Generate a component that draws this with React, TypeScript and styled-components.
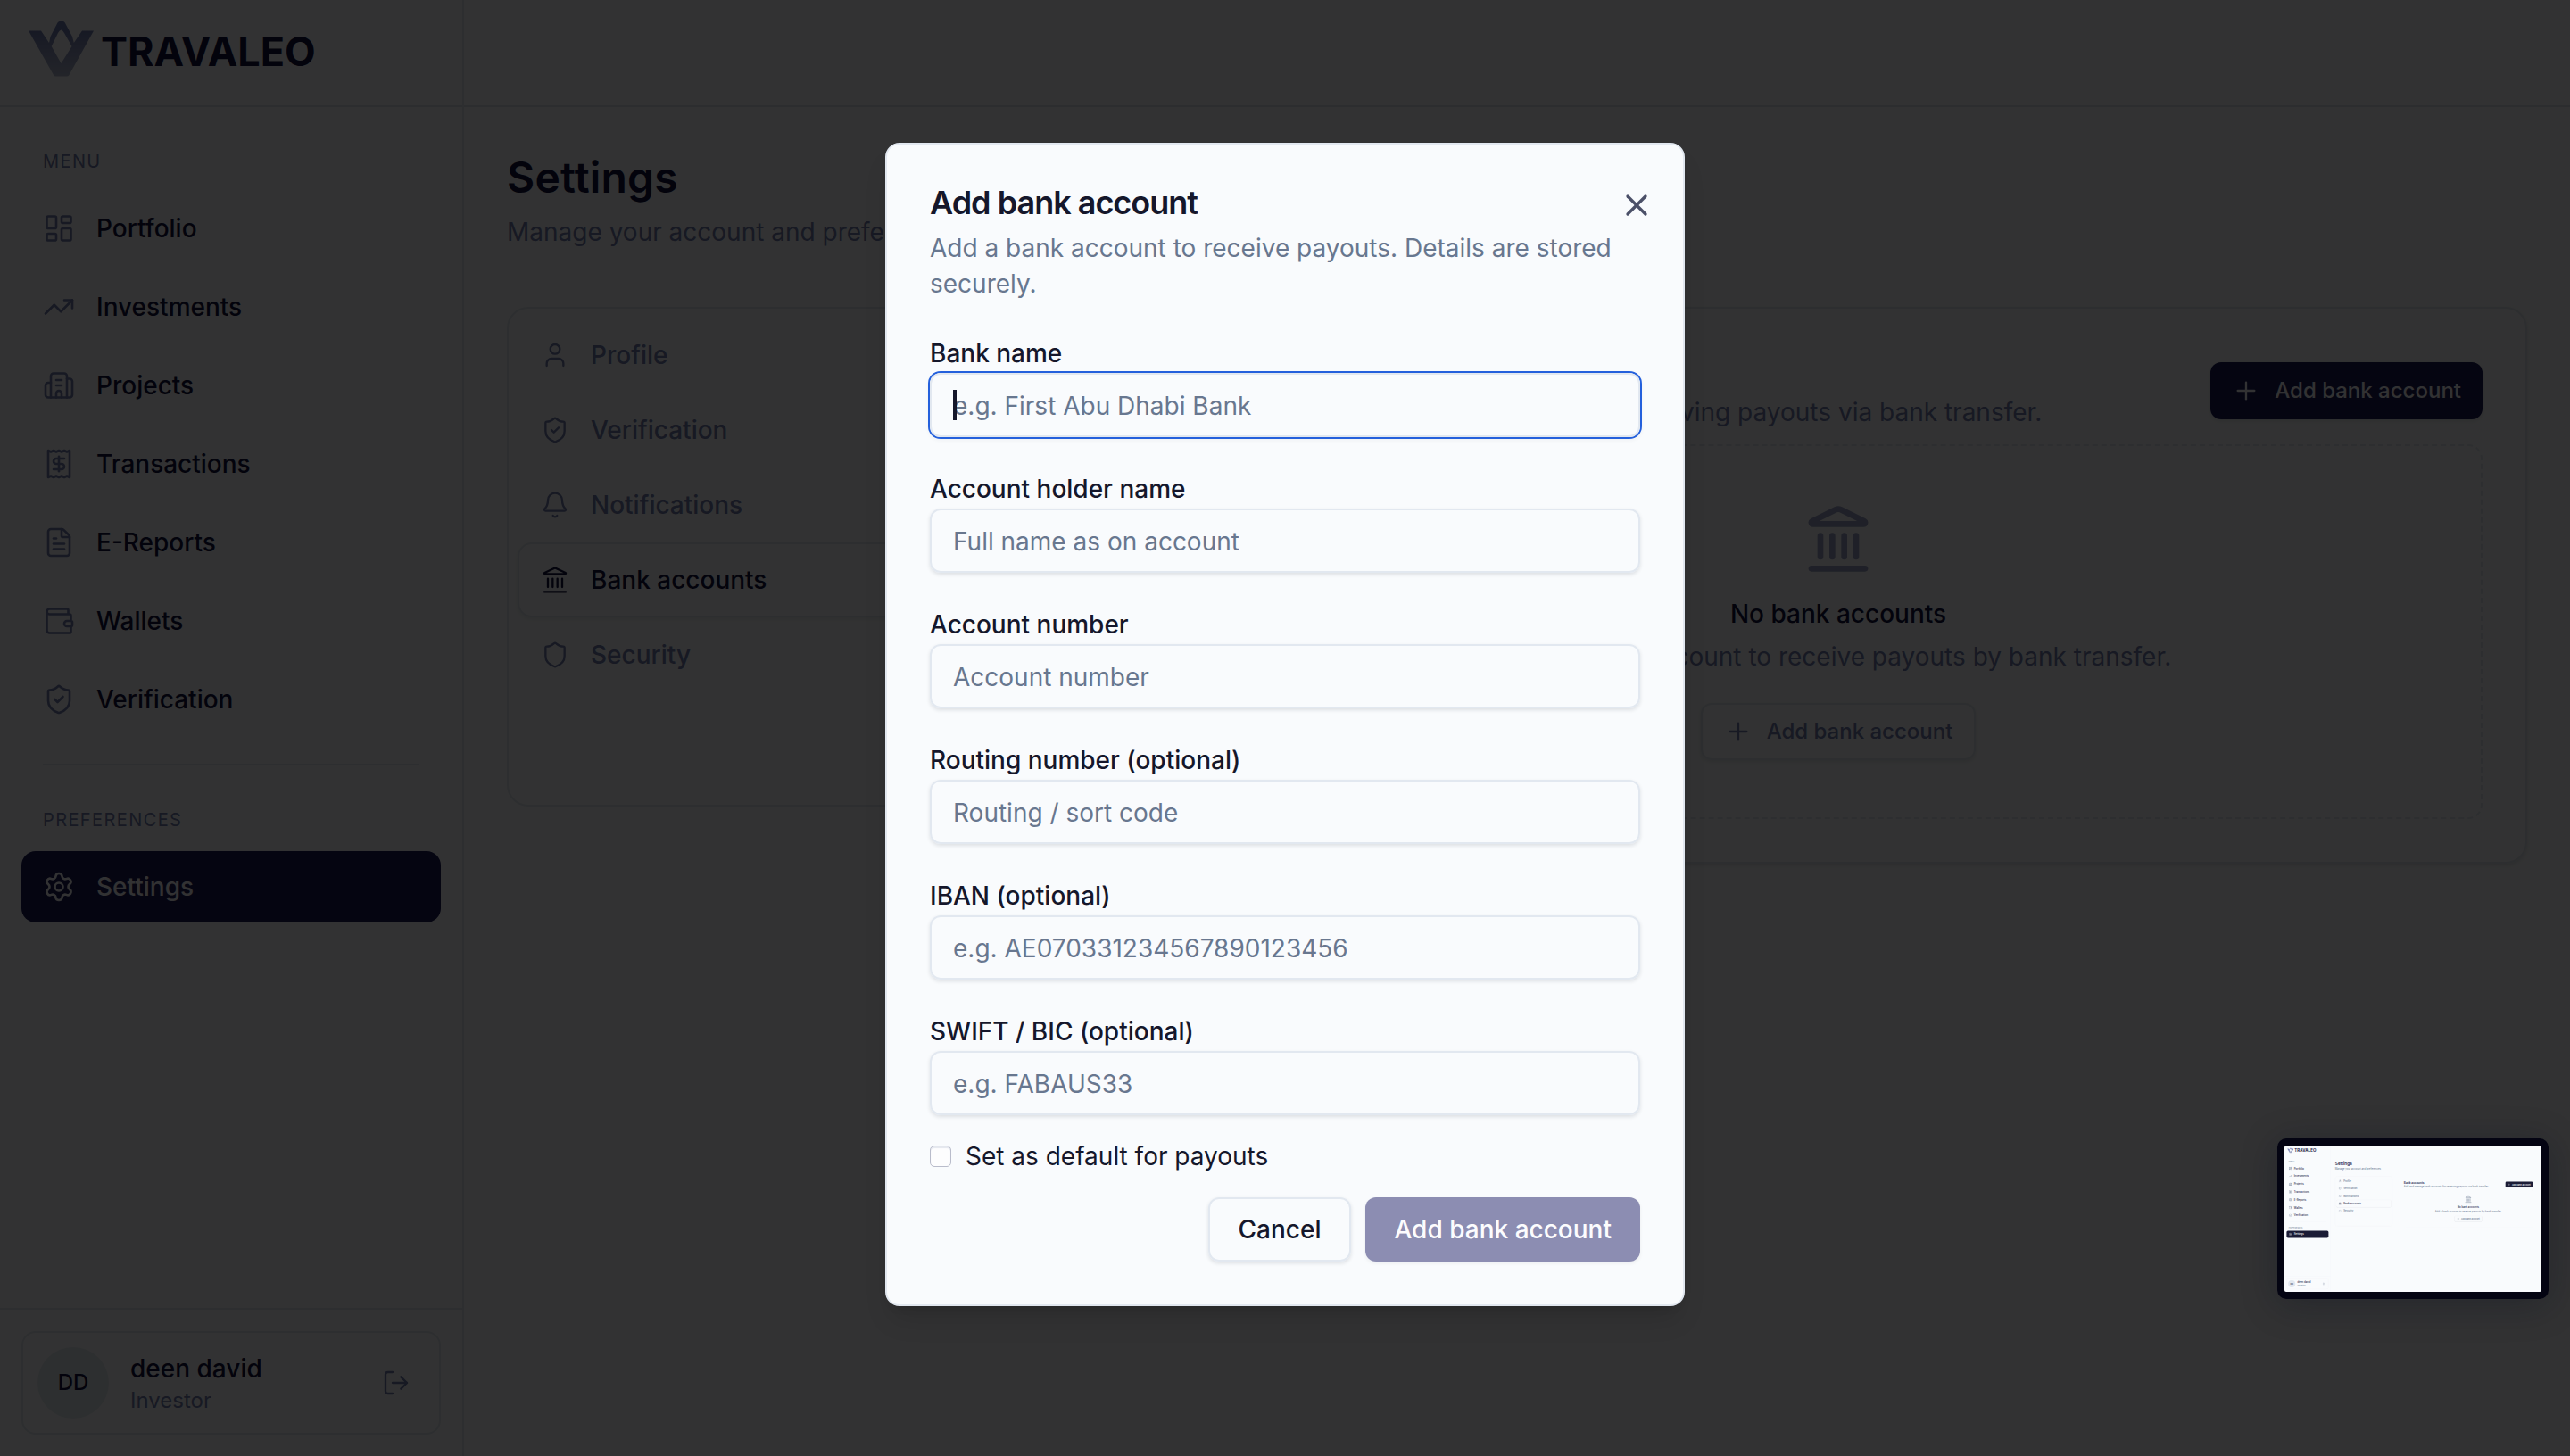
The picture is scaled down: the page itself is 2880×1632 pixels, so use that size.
import React from "react";
import styled, { createGlobalStyle, css } from "styled-components";
import {
  LayoutDashboard, TrendingUp, Building2, Receipt, FileText, Wallet, ShieldCheck,
  Settings, LogOut, User, Bell, Landmark, Shield, Plus, X,
} from "lucide-react";

const c = {
  bg: "#f9fbfd",
  border: "#e2e8f0",
  text: "#15172b",
  muted: "#68778f",
  slate: "#4b5068",
  ring: "#2460dc",
};

const Global = createGlobalStyle`
  :root {
    --ink: #12123f;
    --navy: #1a1a58;
    --soft: #727cae;
    --line: #dfe5ed;
  }
  *, *::before, *::after { box-sizing: border-box; }
  html, body { margin: 0; padding: 0; overflow: hidden; background: ${c.bg}; }
  body, input, button { font-family: Inter, "Liberation Sans", sans-serif; }
`;

const Screen = styled.div`
  position: relative;
  width: 2880px;
  height: 1632px;
  overflow: hidden;
`;

const Page = styled.div`
  display: flex;
  width: 2880px;
  height: 1632px;
  background: ${c.bg};
  color: var(--ink);
  font-size: 28px;
  line-height: 40px;
`;

const Sidebar = styled.aside`
  display: flex;
  flex-direction: column;
  width: 520px;
  border-right: 2px solid var(--line);
`;

const Brand = styled.div`
  display: flex;
  align-items: flex-start;
  height: 120px;
  padding: 24px 32px 0;
  border-bottom: 2px solid #d9e1ea;
`;

const BrandName = styled.span`
  margin: 7px 0 0 7px;
  font-size: 45px;
  line-height: 54px;
  font-weight: 700;
  letter-spacing: 0;
`;

const Nav = styled.nav`
  display: flex;
  flex-direction: column;
  flex: 1;
  padding: 46px 24px 0;
`;

const GroupTitle = styled.div`
  padding: 0 24px;
  margin-bottom: 20px;
  font-size: 20px;
  line-height: 30px;
  letter-spacing: 1.4px;
  color: var(--soft);
`;

const NavList = styled.div`
  display: flex;
  flex-direction: column;
  gap: 8px;
`;

const NavItem = styled.a<{ $active?: boolean }>`
  display: flex;
  align-items: center;
  gap: 24px;
  height: 80px;
  padding: 0 24px;
  border-radius: 16px;
  font-weight: 500;
  svg { color: var(--soft); }
  ${(p) => p.$active && css`
    background: var(--navy);
    color: ${c.bg};
    svg { color: ${c.bg}; }
  `}
`;

const Divider = styled.div`
  height: 2px;
  margin: 32px 24px 46px;
  background: var(--line);
`;

const Footer = styled.div`
  padding: 24px;
  border-top: 2px solid var(--line);
`;

const UserCard = styled.div`
  display: flex;
  align-items: center;
  gap: 24px;
  padding: 16px;
  border: 2px solid var(--line);
  border-radius: 16px;
`;

const Avatar = styled.div`
  display: grid;
  place-items: center;
  width: 80px;
  height: 80px;
  border-radius: 50%;
  background: ${c.border};
  font-size: 24px;
  font-weight: 500;
`;

const UserText = styled.div`
  flex: 1;
`;

const UserName = styled.div`
  font-weight: 500;
  line-height: 40px;
`;

const UserRole = styled.div`
  font-size: 24px;
  line-height: 32px;
  color: var(--soft);
`;

const LogoutButton = styled.div`
  display: flex;
  padding: 0 16px;
  color: var(--soft);
`;

const Main = styled.main`
  flex: 1;
  display: flex;
  flex-direction: column;
`;

const TopBar = styled.header`
  height: 120px;
  border-bottom: 2px solid #d9e1ea;
`;

const Content = styled.div`
  padding: 48px;
`;

const PageTitle = styled.h1`
  margin: 0 0 10px;
  font-size: 48px;
  line-height: 62px;
  font-weight: 600;
  letter-spacing: 0.2px;
`;

const Muted = styled.p`
  margin: 0;
  color: var(--soft);
`;

const Columns = styled.div`
  display: flex;
  align-items: flex-start;
  gap: 80px;
  margin-top: 64px;
`;

const Tabs = styled.div`
  width: 640px;
  height: 560px;
  padding: 10px;
  border: 2px solid var(--line);
  border-radius: 24px;
`;

const Tab = styled.div<{ $active?: boolean }>`
  display: flex;
  align-items: center;
  gap: 24px;
  height: 84px;
  padding: 0 24px;
  border: 2px solid transparent;
  border-radius: 16px;
  font-weight: 500;
  color: var(--soft);
  ${(p) => p.$active && css`
    border-color: var(--line);
    color: var(--ink);
    box-shadow: 0 2px 4px rgba(15, 23, 42, 0.08);
  `}
`;

const Card = styled.section`
  flex: 1;
  padding: 48px;
  border: 2px solid var(--line);
  border-radius: 24px;
  box-shadow: 0 2px 4px rgba(15, 23, 42, 0.12);
`;

const CardHead = styled.div`
  display: flex;
  align-items: center;
  justify-content: space-between;
  margin-bottom: 16px;
`;

const CardTitle = styled.h2`
  margin: 0 0 8px;
  font-size: 32px;
  line-height: 40px;
  font-weight: 600;
`;

const SmallButton = styled.div<{ $outline?: boolean }>`
  display: flex;
  align-items: center;
  gap: 16px;
  height: 64px;
  padding: 0 24px;
  border-radius: 12px;
  font-size: 24px;
  font-weight: 500;
  white-space: nowrap;
  background: var(--navy);
  color: ${c.bg};
  box-shadow: 0 2px 4px rgba(15, 23, 42, 0.1);
  ${(p) => p.$outline && css`
    margin-top: 32px;
    border: 2px solid var(--line);
    background: transparent;
    color: var(--soft);
  `}
`;

const Empty = styled.div`
  display: flex;
  flex-direction: column;
  align-items: center;
  padding: 64px;
  border: 2px dashed var(--line);
  border-radius: 16px;
  svg.empty-icon { color: var(--soft); opacity: 0.7; }
`;

const EmptyTitle = styled.div`
  margin: 24px 0 8px;
  font-weight: 500;
`;

const Overlay = styled.div`
  position: absolute;
  inset: 0;
  display: flex;
  align-items: flex-start;
  justify-content: center;
  padding-top: 160px;
  background: rgba(0, 0, 0, 0.8);
`;

const Dialog = styled.div`
  --soft: ${c.muted};
  position: relative;
  width: 896px;
  height: 1304px;
  padding: 48px;
  border: 2px solid ${c.border};
  border-radius: 16px;
  background: ${c.bg};
  color: ${c.text};
  font-size: 28px;
  line-height: 40px;
  box-shadow: 0 20px 30px -6px rgba(0, 0, 0, 0.12), 0 8px 12px -8px rgba(0, 0, 0, 0.12);
`;

const DialogTitle = styled.h2`
  margin: 0 0 14px;
  font-size: 36px;
  line-height: 34px;
  font-weight: 600;
  letter-spacing: -1px;
`;

const CloseIcon = styled.div`
  position: absolute;
  top: 48px;
  right: 32px;
  display: flex;
  color: ${c.slate};
`;

const Form = styled.div`
  display: flex;
  flex-direction: column;
  gap: 44px;
  margin-top: 44px;
`;

const Field = styled.label`
  position: relative;
  display: flex;
  flex-direction: column;
  gap: 8px;
  font-weight: 500;
  line-height: 28px;
`;

const Input = styled.input<{ $focused?: boolean }>`
  height: 72px;
  padding: 2px 24px 0;
  border: 2px solid ${c.border};
  border-radius: 12px;
  outline: none;
  background: transparent;
  font-size: 28px;
  color: ${c.text};
  box-shadow: ${(p) =>
    p.$focused
      ? `0 0 0 2px ${c.ring}, 0 2px 4px 2px rgba(15, 23, 42, 0.04)`
      : "0 2px 4px rgba(15, 23, 42, 0.12)"};
  &::placeholder { color: ${c.muted}; opacity: 1; }
`;

const Caret = styled.span`
  position: absolute;
  left: 26px;
  bottom: 19px;
  width: 4px;
  height: 34px;
  background: ${c.text};
`;

const CheckRow = styled.label`
  display: flex;
  align-items: center;
  gap: 16px;
  margin: 26px 0;
`;

const CheckBox = styled.span`
  width: 24px;
  height: 24px;
  border: 1px solid #b9bccb;
  border-radius: 5px;
  background: #fdfdfe;
  box-shadow: inset 0 2px 1px #e4e7ee;
`;

const Actions = styled.div`
  display: flex;
  justify-content: flex-end;
  gap: 16px;
`;

const Button = styled.div<{ $disabled?: boolean }>`
  display: flex;
  align-items: center;
  justify-content: center;
  height: 72px;
  padding: 0 32px;
  border: 2px solid ${c.border};
  border-radius: 12px;
  font-weight: 500;
  box-shadow: 0 2px 4px rgba(15, 23, 42, 0.12);
  ${(p) => p.$disabled && css`
    border: none;
    background: #8c8db2;
    color: #fcfcfe;
    box-shadow: 0 2px 4px rgba(15, 23, 42, 0.06);
  `}
`;

const Preview = styled.div`
  position: absolute;
  left: 2552px;
  top: 1276px;
  width: 304px;
  height: 180px;
  overflow: hidden;
  border: 8px solid #040412;
  border-radius: 10px;
  box-shadow: 0 6px 40px rgba(10, 16, 30, 0.3);
`;

const Miniature = styled.div`
  --ink: #1c2348;
  --navy: #1b1c36;
  --soft: ${c.muted};
  --line: #eef1f6;
  width: 2880px;
  height: 1640px;
  background: ${c.bg};
  transform: scale(0.1);
  transform-origin: 0 0;
  ${Card} {
    border-color: transparent;
    box-shadow: none;
  }
  ${Brand}, ${TopBar} {
    border-color: transparent;
  }
`;

const Logo = () => (
  <svg width="74" height="62" viewBox="0 0 74 62" fill="none">
    <defs>
      <linearGradient id="mark" x1="0" y1="10" x2="0" y2="62" gradientUnits="userSpaceOnUse">
        <stop offset="0" stopColor="#707cb4" />
        <stop offset="1" stopColor="#b0b6cc" />
      </linearGradient>
    </defs>
    <path
      fill="url(#mark)"
      fillRule="evenodd"
      d="M0 10.5H14L23 24L24.500 17L32.500 1.500Q33.500 0 34.500 0H39Q40 0 40.800 1.500L49 17L50.800 24L60 10.500H73L45.500 60Q44.500 61.500 43 61.500H30.500Q29 61.500 28 60ZM36.500 9.500Q34.500 10 33 13L25.700 28L36.500 47L48.500 28L40 13Q38.500 10 36.500 9.500Z"
    />
  </svg>
);

const menu = [
  { label: "Portfolio", icon: LayoutDashboard },
  { label: "Investments", icon: TrendingUp },
  { label: "Projects", icon: Building2 },
  { label: "Transactions", icon: Receipt },
  { label: "E-Reports", icon: FileText },
  { label: "Wallets", icon: Wallet },
  { label: "Verification", icon: ShieldCheck },
];

const tabs = [
  { label: "Profile", icon: User },
  { label: "Verification", icon: ShieldCheck },
  { label: "Notifications", icon: Bell },
  { label: "Bank accounts", icon: Landmark, active: true },
  { label: "Security", icon: Shield },
];

const fields = [
  { label: "Bank name", hint: "e.g. First Abu Dhabi Bank", focused: true },
  { label: "Account holder name", hint: "Full name as on account" },
  { label: "Account number", hint: "Account number" },
  { label: "Routing number (optional)", hint: "Routing / sort code" },
  { label: "IBAN (optional)", hint: "e.g. AE070331234567890123456" },
  { label: "SWIFT / BIC (optional)", hint: "e.g. FABAUS33" },
];

const SettingsPage = () => (
  <Page>
    <Sidebar>
      <Brand>
        <Logo />
        <BrandName>TRAVALEO</BrandName>
      </Brand>
      <Nav>
        <GroupTitle>MENU</GroupTitle>
        <NavList>
          {menu.map(({ label, icon: Icon }) => (
            <NavItem key={label}>
              <Icon size={36} strokeWidth={1.75} />
              {label}
            </NavItem>
          ))}
        </NavList>
        <Divider />
        <GroupTitle>PREFERENCES</GroupTitle>
        <NavItem $active>
          <Settings size={36} strokeWidth={1.75} />
          Settings
        </NavItem>
      </Nav>
      <Footer>
        <UserCard>
          <Avatar>DD</Avatar>
          <UserText>
            <UserName>deen david</UserName>
            <UserRole>Investor</UserRole>
          </UserText>
          <LogoutButton>
            <LogOut size={32} strokeWidth={1.75} />
          </LogoutButton>
        </UserCard>
      </Footer>
    </Sidebar>
    <Main>
      <TopBar />
      <Content>
        <PageTitle>Settings</PageTitle>
        <Muted>Manage your account and preferences</Muted>
        <Columns>
          <Tabs>
            {tabs.map(({ label, icon: Icon, active }) => (
              <Tab key={label} $active={active}>
                <Icon size={32} strokeWidth={1.75} />
                {label}
              </Tab>
            ))}
          </Tabs>
          <Card>
            <CardHead>
              <div>
                <CardTitle>Bank accounts</CardTitle>
                <Muted>Add and manage bank accounts for receiving payouts via bank transfer.</Muted>
              </div>
              <SmallButton>
                <Plus size={32} strokeWidth={1.75} />
                Add bank account
              </SmallButton>
            </CardHead>
            <Empty>
              <Landmark className="empty-icon" size={80} />
              <EmptyTitle>No bank accounts</EmptyTitle>
              <Muted>Add a bank account to receive payouts by bank transfer.</Muted>
              <SmallButton $outline>
                <Plus size={32} strokeWidth={1.75} />
                Add bank account
              </SmallButton>
            </Empty>
          </Card>
        </Columns>
      </Content>
    </Main>
  </Page>
);

export default function App() {
  return (
    <Screen>
      <Global />
      <SettingsPage />
      <Overlay>
        <Dialog>
          <DialogTitle>Add bank account</DialogTitle>
          <Muted>Add a bank account to receive payouts. Details are stored securely.</Muted>
          <CloseIcon>
            <X size={40} strokeWidth={2} />
          </CloseIcon>
          <Form>
            {fields.map((f) => (
              <Field key={f.label}>
                {f.label}
                <Input placeholder={f.hint} $focused={f.focused} />
                {f.focused && <Caret />}
              </Field>
            ))}
          </Form>
          <CheckRow>
            <CheckBox />
            Set as default for payouts
          </CheckRow>
          <Actions>
            <Button>Cancel</Button>
            <Button $disabled>Add bank account</Button>
          </Actions>
        </Dialog>
      </Overlay>
      <Preview>
        <Miniature>
          <SettingsPage />
        </Miniature>
      </Preview>
    </Screen>
  );
}
